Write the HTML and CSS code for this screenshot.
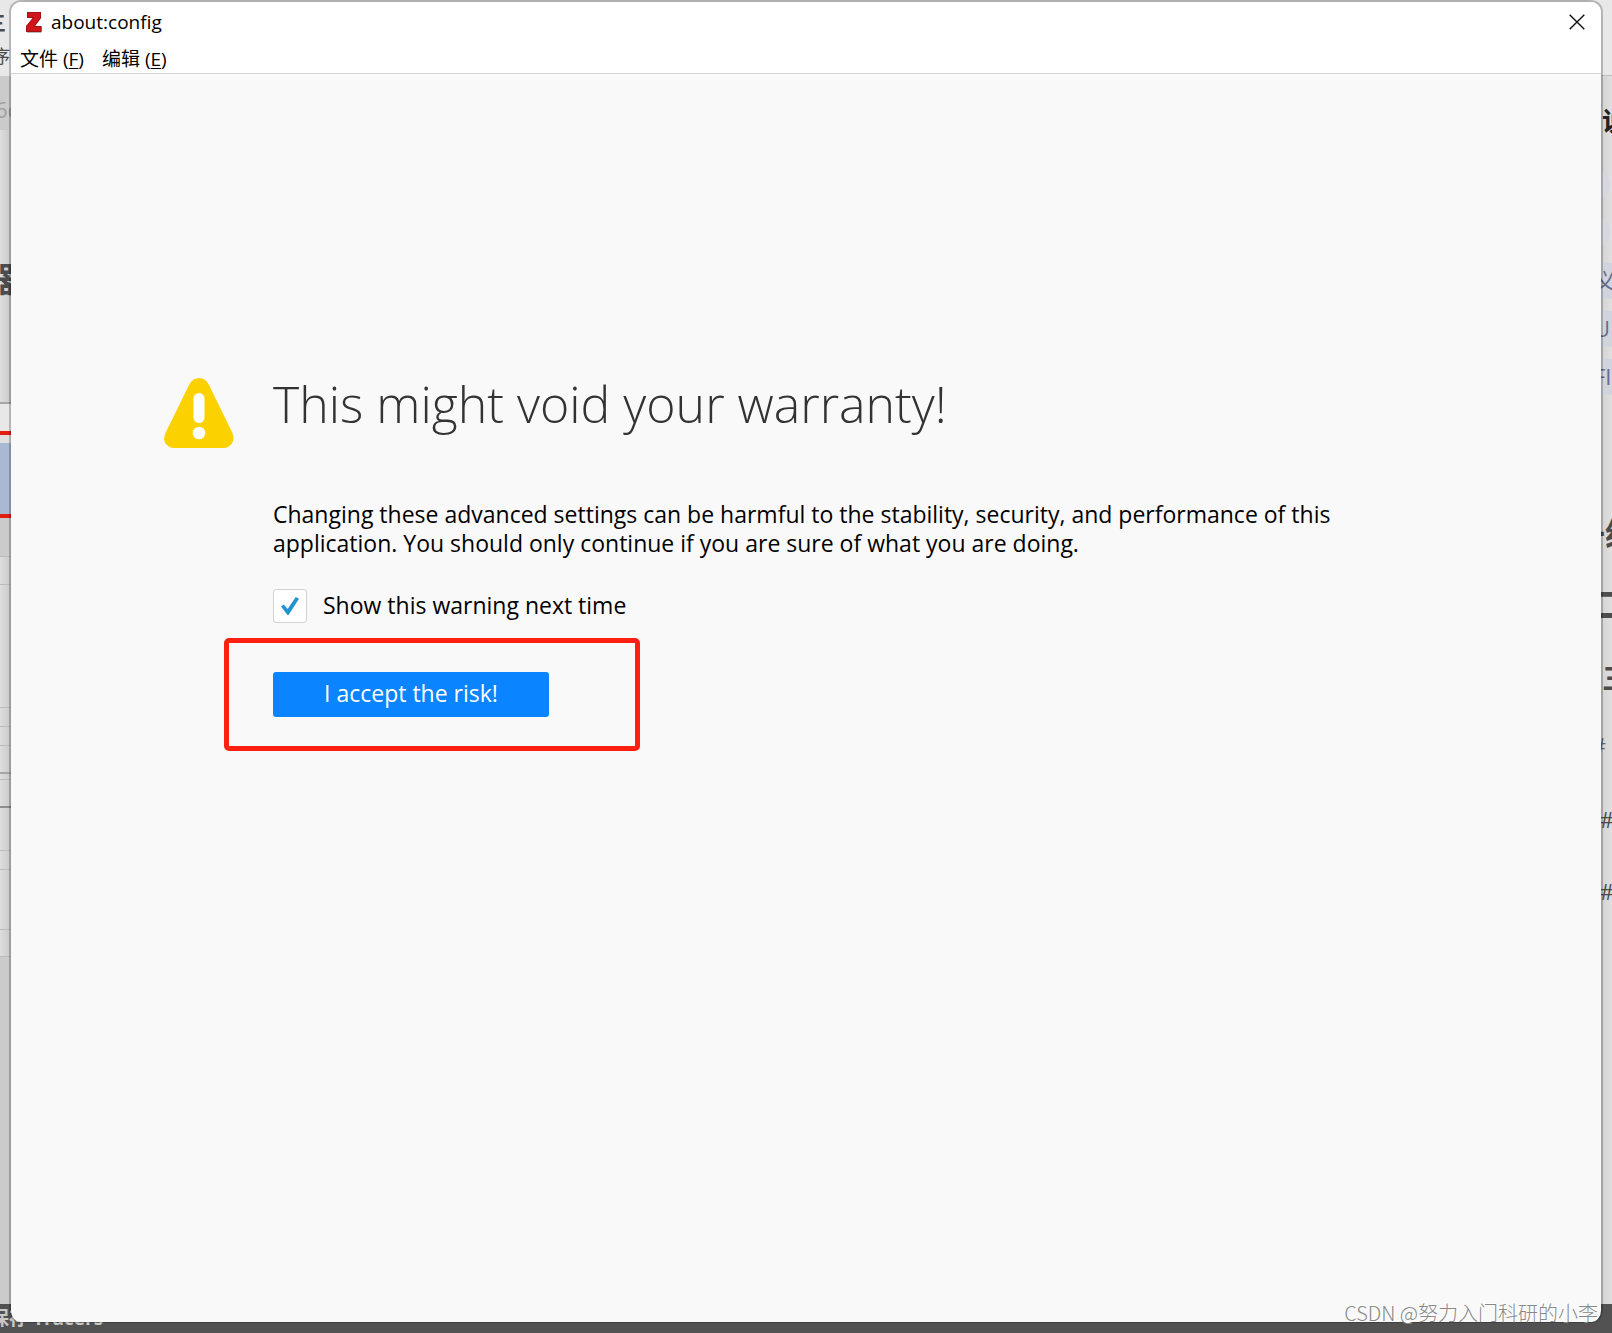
FILE: index.html
```html
<!DOCTYPE html>
<html lang="zh-CN">
<head>
<meta charset="utf-8">
<title>about:config</title>
<link rel="stylesheet" href="styles.css">
</head>
<body>
<div class="backdrop" aria-hidden="true">
  <div class="side side-left">
    <div class="cell h76 light"><span class="frag frag-menu">三</span><span class="frag frag-xu">序</span></div>
    <div class="cell h54 shade"><span class="frag frag-6c">6c</span></div>
    <div class="cell h274 line-mid"><span class="frag frag-qi">器</span></div>
    <div class="cell h27 light"></div>
    <div class="cell h87 marked"></div>
    <div class="cell h39 shade line"></div>
    <div class="cell h28 line"></div>
    <div class="cell h123 line"></div>
    <div class="cell h19 line"></div>
    <div class="cell h19 line"></div>
    <div class="cell h28 line-mid"></div>
    <div class="cell h6 line"></div>
    <div class="cell h28 line-dark"></div>
    <div class="cell h43 line"></div>
    <div class="cell h19 line"></div>
    <div class="cell h60 line"></div>
    <div class="cell h27 line"></div>
    <div class="cell fill shade"></div>
  </div>
  <div class="side side-right">
    <div class="cell h76 light line"></div>
    <div class="cell fill-plain">
      <span class="frag right-title">费说</span>
      <span class="dot dot-1"></span><span class="dot dot-2"></span>
      <span class="tag tag-1">义</span><span class="tag tag-2">U</span><span class="tag tag-3">FI</span>
      <span class="frag head-1">一级</span>
      <span class="frag head-2">二</span>
      <span class="frag head-3">三</span>
      <span class="frag hash hash-1">#</span>
      <span class="frag hash hash-2">#</span>
      <span class="frag hash hash-3">#</span>
    </div>
  </div>
  <div class="taskbar">保存 Tracers</div>
</div>

<div class="window">
  <header class="chrome">
    <div class="titlebar">
      <svg class="logo" viewBox="0 0 16 21" aria-hidden="true">
        <path d="M1 0H15V6L9 14H15.500V20H0V14L7 6H1Z" fill="#d0161a"/>
        <path d="M1.500.500H14.500V6L8 14.500H15V19.500H.500V14.500L7.500 5.500H1.500Z" fill="none" stroke="#a01418" stroke-width="1"/>
        <path d="M1 20.500H15.500" stroke="#bbb" stroke-width="1"/>
      </svg>
      <h1 class="title">about:config</h1>
      <button class="close" type="button" aria-label="Close">
        <svg viewBox="0 0 16 16" aria-hidden="true"><path d="M.7.700 15.300 15.300M15.300.7.700 15.300" stroke="#111" stroke-width="1.400" fill="none"/></svg>
      </button>
    </div>
    <nav class="menubar">
      <button class="menu" type="button">文件 (<u>F</u>)</button>
      <button class="menu" type="button">编辑 (<u>E</u>)</button>
    </nav>
  </header>
  <main class="page">
    <section class="warning">
      <svg class="sign" viewBox="0 0 70 70" aria-hidden="true">
        <path d="M25.500 6Q29 0 35 0T44.500 6L68.500 55Q71 62 67.500 66T60 70H10Q5.500 70 2 66T1.500 55Z" fill="#fcd100"/>
        <rect x="29.500" y="15" width="11" height="30" rx="5.500" fill="#fff"/>
        <circle cx="35" cy="55" r="6.300" fill="#fff"/>
      </svg>
      <div class="content">
        <h2 class="heading">This might void your warranty!</h2>
        <p class="text">Changing these advanced settings can be harmful to the stability, security, and performance of this application. You should only continue if you are sure of what you are doing.</p>
        <label class="option"><input class="tick" type="checkbox" checked><span>Show this warning next time</span></label>
        <div class="action"><button class="accept" type="button">I accept the risk!</button></div>
      </div>
    </section>
  </main>
  <div class="watermark">CSDN @努力入门科研的小李</div>
</div>
</body>
</html>
```
FILE: styles.css
```css
* { box-sizing: border-box; }
body {
  margin: 0;
  min-height: 100vh;
  position: relative;
  padding: 0 9px 10px;
  font-family: "Open Sans", "Noto Sans CJK SC", sans-serif;
  color: #000;
  background: #dcdcdc;
}

/* Windows that show behind the dialog */
.backdrop { position: absolute; inset: 0; overflow: hidden; background: #e0e0e0; }
.side { position: absolute; top: 0; bottom: 29px; width: 24px; display: flex; flex-direction: column; }
.side-left { left: 0; background: linear-gradient(90deg, #dedede, #c8c8c8 11px); }
.side-right { right: 0; background: linear-gradient(90deg, #d0d0d0 12px, #e0e0e0); }
.cell { position: relative; flex: none; }
.h6 { height: 6px; }
.h19 { height: 19px; }
.h27 { height: 27px; }
.h28 { height: 28px; }
.h39 { height: 39px; }
.h43 { height: 43px; }
.h54 { height: 54px; }
.h60 { height: 60px; }
.h76 { height: 76px; }
.h87 { height: 87px; }
.h123 { height: 123px; }
.h274 { height: 274px; }
.cell.fill, .cell.fill-plain { flex: 1; }
.light { background: #e8e8e8; }
.shade { background: #cbcbcb; }
.line { border-bottom: 1px solid #bcbcbc; }
.line-mid { border-bottom: 2px solid #a6a6a6; }
.line-dark { border-bottom: 2px solid #8c8c8c; }
.marked {
  background: #a9b8d3;
  border: solid #e32010;
  border-width: 4px 0;
  box-shadow: inset 0 8px #e0e0e0;
}
.frag { position: absolute; line-height: 1; white-space: nowrap; color: #4c4c4c; }
.frag-menu { left: -14px; top: 14px; font-size: 20px; font-weight: 700; }
.frag-xu { left: -8px; top: 47px; font-size: 18px; }
.frag-6c { left: -5px; top: 22px; font-size: 22px; color: #a0a0a0; }
.frag-qi { left: -18px; top: 132px; font-size: 34px; font-weight: 700; }
.right-title { right: -16px; top: 32px; font-size: 26px; font-weight: 700; color: #222; }
.dot { position: absolute; right: 2px; width: 32px; height: 32px; border-radius: 50%; background: #d5d8df; }
.dot-1 { top: 93px; }
.dot-2 { top: 140px; }
.tag { position: absolute; right: 0; width: 24px; height: 36px; padding-left: 6px; line-height: 34px; font-size: 22px; color: #666c8c; background: #d0d4dc; }
.tag-1 { top: 187px; }
.tag-2 { top: 235px; }
.tag-3 { top: 283px; }
.head-1 { right: -25px; top: 442px; font-size: 32px; font-weight: 700; }
.head-2 { right: -17px; top: 511px; font-size: 36px; font-weight: 700; }
.head-3 { right: -18px; top: 588px; font-size: 28px; font-weight: 700; }
.hash { font-size: 22px; }
.hash-1 { right: 6px; top: 658px; color: #5c6c78; }
.hash-2 { right: -2px; top: 732px; }
.hash-3 { right: -2px; top: 804px; }
.taskbar {
  position: absolute;
  inset: auto 0 0;
  height: 29px;
  text-indent: -10px;
  font-size: 19px;
  line-height: 28px;
  font-weight: 700;
  color: #c8c8c8;
  background: #525252;
}

/* Dialog */
.window {
  position: relative;
  display: flex;
  flex-direction: column;
  min-height: calc(100vh - 10px);
  border: 2px solid rgba(0, 0, 0, .22);
  border-bottom-width: 1px;
  border-radius: 12px;
  background: #f9f9f9;
  background-clip: padding-box;
}
.chrome { background: #fff; border-bottom: 1px solid #d6d6d6; border-radius: 10px 10px 0 0; }
.titlebar { display: flex; align-items: center; height: 40px; padding: 0 16px 0 15px; }
.logo { width: 16px; height: 21px; }
.title { flex: 1; margin: 0 0 0 9px; font-size: 19px; line-height: 24px; font-weight: 400; }
.close { width: 16px; height: 16px; padding: 0; border: 0; background: none; }
.close svg { display: block; }
.menubar { display: flex; gap: 18px; height: 31px; padding: 5px 9px 0; }
.menu { padding: 0; border: 0; background: none; font: inherit; font-size: 19px; line-height: 24px; height: 24px; color: #000; }
.menu u { text-underline-offset: 2px; }

.page { flex: 1; padding: 304px 24px 48px; }
.warning { display: flex; gap: 39px; max-width: 1284px; margin: 0 auto; }
.sign { flex: none; width: 70px; height: 70px; }
.content { flex: 1; }
.heading { margin: 0 0 70px; font-size: 50px; line-height: 52px; font-weight: 300; color: #333; }
.text { margin: 0 0 31px; font-size: 23px; line-height: 29px; }
.option { display: flex; align-items: center; gap: 16px; width: fit-content; font-size: 23px; line-height: 32px; }
.option span { padding-bottom: 2px; }
.tick {
  appearance: none;
  width: 34px;
  height: 34px;
  margin: 0;
  border: 1px solid #d2d2d6;
  border-radius: 3px;
  background: #fff;
  display: grid;
  place-items: center;
}
.tick:checked::before {
  content: "";
  width: 18px;
  height: 18px;
  background: #2292d0;
  clip-path: polygon(0 53%, 15% 42%, 37% 66%, 82% 0, 100% 10%, 42% 100%, 36% 100%);
}
.action { position: relative; width: fit-content; margin-top: 49px; }
.action::after {
  content: "";
  position: absolute;
  inset: -34px -91px -34px -49px;
  border: 5px solid #ff2012;
  border-radius: 5px;
  pointer-events: none;
}
.accept {
  display: block;
  width: 276px;
  height: 45px;
  padding: 0 0 3px;
  border: 0;
  border-radius: 3px;
  font: inherit;
  font-size: 23px;
  line-height: 42px;
  color: #fff;
  background: #0a84ff;
}
.watermark {
  position: absolute;
  right: 3px;
  bottom: -5px;
  font-family: "Noto Sans CJK SC", sans-serif;
  font-size: 20px;
  line-height: 28px;
  font-weight: 300;
  color: #888;
  text-shadow: -1px -1px #fff;
}
```
